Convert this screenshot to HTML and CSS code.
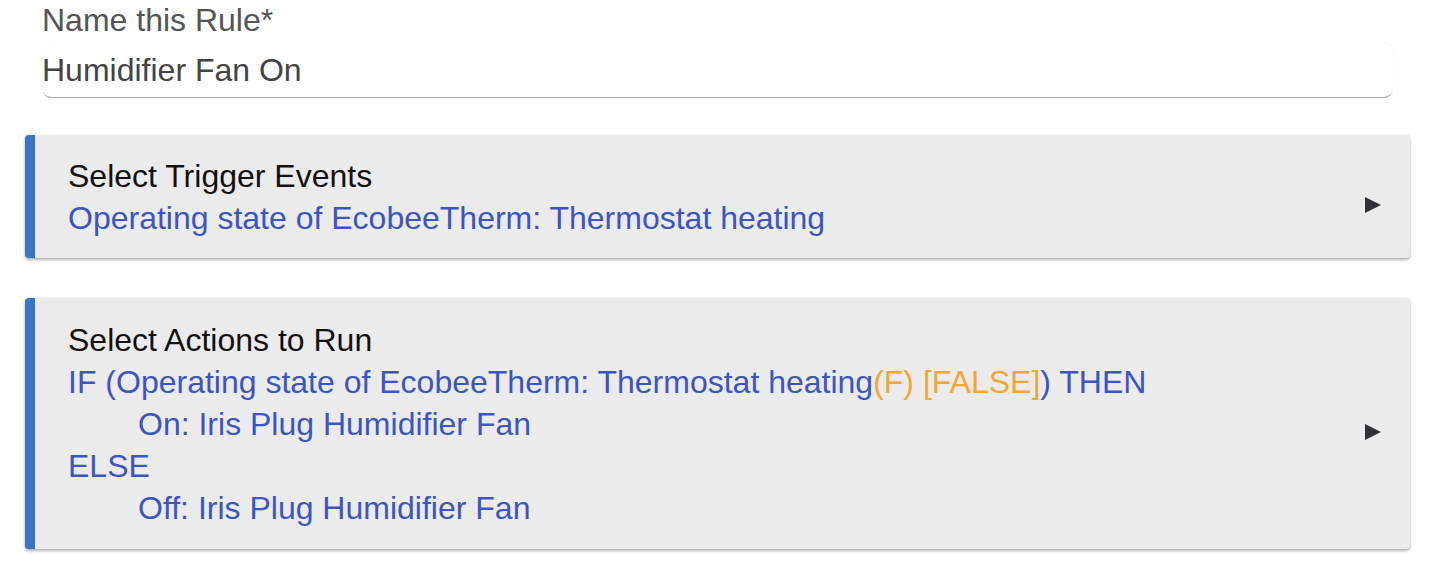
FILE: index.html
```html
<!DOCTYPE html>
<html>
<head>
<meta charset="utf-8">
<link rel="stylesheet" href="styles.css">
</head>
<body>
<div class="page">
  <div class="field">
    <div class="field-label">Name this Rule*</div>
    <div class="field-input">Humidifier Fan On</div>
  </div>

  <div class="card card-trigger">
    <div class="card-body">
      <div class="line title">Select Trigger Events</div>
      <div class="line link">Operating state of EcobeeTherm: Thermostat heating</div>
    </div>
    <svg class="arrow" width="16" height="16" viewBox="0 0 16 16"><polygon points="0,0 16,8 0,16" fill="#2f3236"/></svg>
  </div>

  <div class="card card-actions">
    <div class="card-body">
      <div class="line title">Select Actions to Run</div>
      <div class="line link">IF (Operating state of EcobeeTherm: Thermostat heating<span class="warn">(F) [FALSE]</span>) THEN</div>
      <div class="line link indent">On: Iris Plug Humidifier Fan</div>
      <div class="line link">ELSE</div>
      <div class="line link indent">Off: Iris Plug Humidifier Fan</div>
    </div>
    <svg class="arrow" width="16" height="16" viewBox="0 0 16 16"><polygon points="0,0 16,8 0,16" fill="#2f3236"/></svg>
  </div>
</div>
</body>
</html>
```

FILE: styles.css
```css
html, body {
  margin: 0;
  padding: 0;
  background: #ffffff;
}

body {
  font-family: "Liberation Sans", Arial, Helvetica, sans-serif;
  font-size: 32px;
  -webkit-font-smoothing: antialiased;
}

.page {
  width: 1432px;
  height: 566px;
  overflow: hidden;
}

.field {
  margin-left: 42px;
  width: 1351px;
  padding-top: 1px;
}

.field-label {
  color: #555555;
  line-height: 38px;
}

.field-input {
  margin-top: 3px;
  box-sizing: border-box;
  height: 55px;
  padding-top: 4px;
  line-height: 49px;
  color: #444444;
  background: #ffffff;
  border-radius: 9px;
  box-shadow: 0 2px 1px -1px rgba(0, 0, 0, 0.38), 0 0 1px rgba(0, 0, 0, 0.12);
}

.card {
  display: flex;
  align-items: center;
  margin-left: 25px;
  width: 1385px;
  box-sizing: border-box;
  background: #ebebeb;
  border-left: 10px solid #3a74c6;
  border-radius: 4px;
  box-shadow: 0 2px 3px rgba(0, 0, 0, 0.3), 0 0 2px rgba(0, 0, 0, 0.1);
  padding: 20px 29px 19px 33px;
}

.card-trigger {
  margin-top: 38px;
}

.card-actions {
  margin-top: 40px;
  padding-top: 21px;
  padding-bottom: 20px;
}

.card-body {
  flex: 1;
}

.line {
  line-height: 42px;
  white-space: nowrap;
}

.title {
  color: #111111;
}

.link {
  color: #3b55c4;
}

.indent {
  padding-left: 70px;
}

.warn {
  color: #f3a733;
}

.arrow {
  flex: none;
  margin-top: 15px;
}
```
